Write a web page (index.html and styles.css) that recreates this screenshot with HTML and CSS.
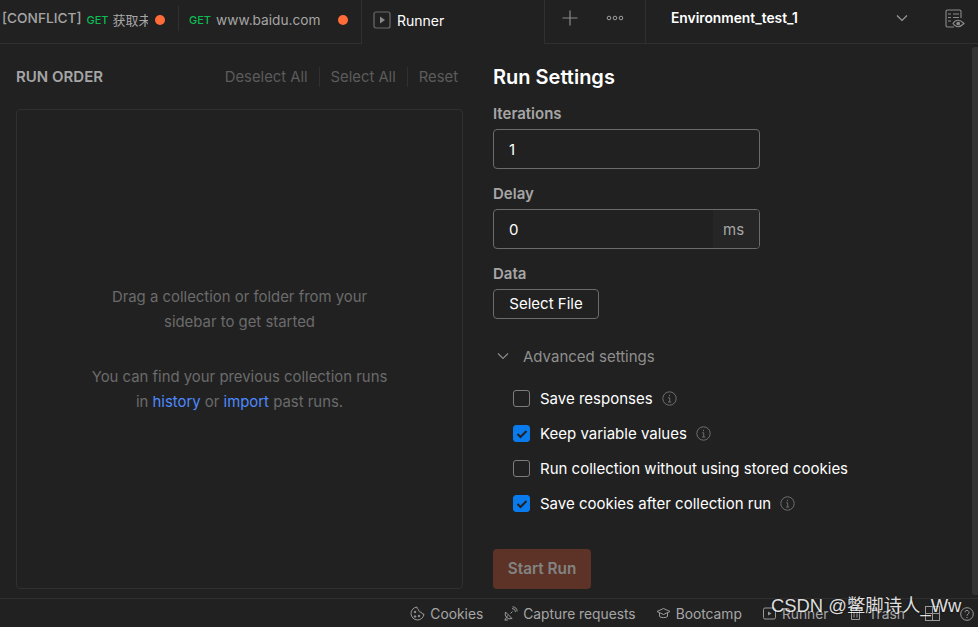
FILE: index.html
```html
<!DOCTYPE html>
<html lang="en">
<head>
<meta charset="utf-8">
<title>Runner</title>
<link rel="stylesheet" href="styles.css">
</head>
<body>
<div class="app">
  <header class="topbar">
    <div class="tab tab-first">
      <span class="conflict">[CONFLICT]</span>
      <span class="get">GET</span>
      <span class="tab-name tab-name-cjk">获取未读消息</span>
      <span class="dot"></span>
    </div>
    <div class="tab tab-second">
      <span class="get">GET</span>
      <span class="tab-name tab-name-url">www.baidu.com</span>
      <span class="dot"></span>
    </div>
    <div class="tab-runner">
      <svg class="runner-icon" width="18" height="18" viewBox="0 0 18 18"><rect x="1" y="1" width="16" height="16" rx="2" fill="none" stroke="#6b6b6b" stroke-width="1.2"/><path d="M7 5.5l5 3.5-5 3.5z" fill="#8a8a8a"/></svg>
      <span>Runner</span>
    </div>
    <div class="tab-actions">
      <svg width="16" height="16" viewBox="0 0 16 16"><path d="M8 0.5v15M0.5 8h15" stroke="#8a8a8a" stroke-width="1.2"/></svg>
      <svg width="18" height="6" viewBox="0 0 18 6"><g fill="none" stroke="#a0a0a0" stroke-width="1"><circle cx="3" cy="3" r="1.8"/><circle cx="9" cy="3" r="1.8"/><circle cx="15" cy="3" r="1.8"/></g></svg>
    </div>
    <div class="env">
      <span class="env-name">Environment_test_1</span>
      <svg width="12" height="8" viewBox="0 0 12 8"><path d="M1 1.5l5 5 5-5" fill="none" stroke="#9a9a9a" stroke-width="1.2"/></svg>
    </div>
    <div class="env-eye">
      <svg width="20" height="20" viewBox="0 0 20 20" fill="none" stroke="#8c8c8c" stroke-width="1.1"><path d="M9 18H2.5A1.5 1.5 0 0 1 1 16.500V2.500A1.500 1.500 0 0 1 2.500 1h12A1.500 1.500 0 0 1 16 2.500V9"/><path d="M3 5h3M8 5h6M3 8.500h3M8 8.500h6M3 12h3"/><path d="M8 14.500c1.500-2.400 3.200-3.200 5-3.200s3.500.8 6 3.200c-2.500 2.400-4.200 3.200-6 3.200s-3.500-.8-5-3.200z"/><circle cx="13.200" cy="14.500" r="1.300" fill="#8c8c8c"/></svg>
    </div>
  </header>

  <main class="main">
    <section class="order">
      <div class="order-head">
        <h2 class="order-title">RUN ORDER</h2>
        <div class="order-actions">
          <span>Deselect All</span>
          <span class="sep"></span>
          <span>Select All</span>
          <span class="sep"></span>
          <span>Reset</span>
        </div>
      </div>
      <div class="drop">
        <p>Drag a collection or folder from your<br>sidebar to get started</p>
        <p>You can find your previous collection runs<br>in <a class="link">history</a> or <a class="link">import</a> past runs.</p>
      </div>
    </section>

    <section class="settings">
      <h1 class="settings-title">Run Settings</h1>
      <label class="field-label">Iterations</label>
      <div class="input">1</div>
      <label class="field-label field-gap">Delay</label>
      <div class="input input-unit"><span class="input-value">0</span><span class="unit">ms</span></div>
      <label class="field-label field-gap">Data</label>
      <button class="file-btn">Select File</button>

      <div class="advanced">
        <svg width="12" height="8" viewBox="0 0 12 8"><path d="M1 1.500l5 5 5-5" fill="none" stroke="#8a8a8a" stroke-width="1.200"/></svg>
        <span>Advanced settings</span>
      </div>

      <ul class="checks">
        <li class="check-row"><span class="box"></span><span>Save responses</span><svg class="info" width="15" height="15" viewBox="0 0 15 15"><circle cx="7.500" cy="7.500" r="6.700" fill="none" stroke="#6e6e6e"/><path d="M7.500 3.800v1.400M6.200 6.800h1.500v4M6 11h3.200" fill="none" stroke="#6e6e6e"/></svg></li>
        <li class="check-row"><span class="box box-on"><svg width="12" height="10" viewBox="0 0 12 10"><path d="M1.500 5l3 3 6-6" fill="none" stroke="#212121" stroke-width="2"/></svg></span><span>Keep variable values</span><svg class="info" width="15" height="15" viewBox="0 0 15 15"><circle cx="7.500" cy="7.500" r="6.700" fill="none" stroke="#6e6e6e"/><path d="M7.500 3.800v1.400M6.200 6.800h1.500v4M6 11h3.200" fill="none" stroke="#6e6e6e"/></svg></li>
        <li class="check-row"><span class="box"></span><span>Run collection without using stored cookies</span></li>
        <li class="check-row"><span class="box box-on"><svg width="12" height="10" viewBox="0 0 12 10"><path d="M1.500 5l3 3 6-6" fill="none" stroke="#212121" stroke-width="2"/></svg></span><span>Save cookies after collection run</span><svg class="info" width="15" height="15" viewBox="0 0 15 15"><circle cx="7.500" cy="7.500" r="6.700" fill="none" stroke="#6e6e6e"/><path d="M7.500 3.800v1.400M6.200 6.800h1.500v4M6 11h3.200" fill="none" stroke="#6e6e6e"/></svg></li>
      </ul>

      <button class="start">Start Run</button>
    </section>
    <div class="scrollbar"></div>
  </main>

  <footer class="statusbar">
    <span class="status-item"><svg width="15" height="15" viewBox="0 0 15 15" fill="none" stroke="#9a9a9a"><path d="M7 1a6.500 6.500 0 1 0 7 7c-1.500.3-2.500-.5-2.700-1.800C9.800 6.300 8.600 5.300 8.700 3.800 7.700 3.500 7 2.500 7 1z"/><circle cx="5" cy="6" r=".8" fill="#9a9a9a"/><circle cx="9" cy="10" r=".8" fill="#9a9a9a"/><circle cx="5" cy="10.500" r=".8" fill="#9a9a9a"/></svg>Cookies</span>
    <span class="status-item"><svg width="15" height="15" viewBox="0 0 15 15" fill="none" stroke="#9a9a9a"><path d="M2.500 6a5 5 0 0 0 6.500 6.500zM2 14l2.500-4.500M5 14H1.500"/><path d="M7.500 7.500l2-2M9 2.500a3.500 3.500 0 0 1 3.500 3.500M9.500.8a5 5 0 0 1 4.700 4.700"/></svg>Capture requests</span>
    <span class="status-item"><svg width="15" height="15" viewBox="0 0 15 15" fill="none" stroke="#9a9a9a"><path d="M1 5.500l6.500-3 6.500 3-6.500 3z"/><path d="M3.500 7v3.500c1 1.500 7 1.500 8 0V7"/></svg>Bootcamp</span>
    <span class="status-item"><svg width="15" height="15" viewBox="0 0 15 15" fill="none" stroke="#9a9a9a"><rect x="1.500" y="2" width="12" height="11" rx="1.500"/><path d="M6 5.500l3.500 2-3.500 2z" fill="#9a9a9a" stroke="none"/></svg>Runner</span>
    <span class="status-item"><svg width="15" height="15" viewBox="0 0 15 15" fill="none" stroke="#9a9a9a"><path d="M2 4h11M5.500 4V2h4v2M3.500 4v9.500h8V4M6 6.500v5M9 6.500v5"/></svg>Trash</span>
    <span class="status-icon"><svg width="15" height="15" viewBox="0 0 15 15" fill="none" stroke="#9a9a9a"><rect x=".5" y=".5" width="14" height="14"/><path d="M7.500 .5V14.500M.5 7.500h14"/></svg></span>
    <span class="status-icon"><svg width="14" height="14" viewBox="0 0 14 14" fill="none" stroke="#9a9a9a"><circle cx="7" cy="7" r="6.300"/><path d="M5 5.300a2 2 0 1 1 3 1.800c-.7.400-1 .8-1 1.600M7 10v1"/></svg></span>
  </footer>
  <div class="watermark">CSDN @鳖脚诗人_Ww</div>
</div>
</body>
</html>
```
FILE: styles.css
```css
* { box-sizing: border-box; }
html, body { margin: 0; height: 100%; overflow: hidden; }
body {
  background: #212121;
  color: #fff;
  font-family: Inter, "Noto Sans CJK SC", sans-serif;
  font-size: 15px;
}
.app { position: relative; display: flex; flex-direction: column; height: 627px; }

/* Top bar */
.topbar { display: flex; height: 44px; flex: none; }
.tab {
  display: flex; align-items: center;
  height: 44px; padding-bottom: 4px;
  border-bottom: 1px solid #303030;
  font-size: 14px; color: #a6a6a6;
  white-space: nowrap; overflow: hidden;
  position: relative;
}
.tab-first { width: 179px; padding-left: 2px; }
.tab-first::after {
  content: ""; position: absolute; right: 0; top: 6px; height: 25px; width: 1px; background: #303030;
}
.tab-second { width: 183px; padding-left: 10px; border-right: 1px solid #303030; }
.tab-second .get { margin-right: 5px; }
.conflict { font-weight: 500; font-size: 13.700px; margin-right: 5px; margin-top: -3px; }
.get { color: #0cbb52; font-size: 11px; font-weight: 500; margin-right: 4px; }
.tab-name { overflow: hidden; }
.tab-name-cjk { width: 35px; font-size: 13px; margin-right: 7px; flex: none; }
.tab-name-url { width: 122px; font-size: 13.700px; flex: none; }
.dot { width: 10px; height: 10px; border-radius: 50%; background: #ff6c37; flex: none; }
.tab-runner {
  display: flex; align-items: center; gap: 6px;
  width: 182px; padding: 0 0 4px 11px; font-size: 14px; font-weight: 400;
}
.tab-actions {
  display: flex; align-items: center; gap: 28px;
  width: 102px; height: 44px; padding: 0 0 8px 17px;
  border-left: 1px solid #303030; border-right: 1px solid #303030; border-bottom: 1px solid #303030;
}
.env {
  display: flex; align-items: center; justify-content: space-between;
  width: 263px; height: 44px; padding: 0 1px 8px 25px;
  border-bottom: 1px solid #303030;
}
.env-name { font-size: 13.800px; font-weight: 600; }
.env-eye {
  flex: 1; height: 44px; padding: 9px 0 0 36px;
  border-bottom: 1px solid #303030;
}

/* Main */
.main { flex: 1; display: flex; position: relative; min-height: 0; }
.order { margin-left: 16px; padding-top: 22px; flex: none; width: 447px; }
.order-head { display: flex; justify-content: space-between; align-items: center; height: 20px; padding-right: 5px; }
.order-title { margin: 0; font-size: 15px; font-weight: 600; color: #a6a6a6; }
.order-actions { display: flex; align-items: center; gap: 11px; margin-top: 2px; color: #5c5c5c; font-size: 14.800px; }
.sep { width: 1px; height: 20px; background: #303030; }
.drop {
  margin-top: 23px; height: 480px; padding-top: 2px;
  border: 1px solid #303030; border-radius: 4px;
  display: flex; flex-direction: column; justify-content: center; align-items: center;
  gap: 30px; text-align: center; color: #6b6b6b; font-size: 14.900px; line-height: 25px;
}
.drop p { margin: 0; }
.link { color: #4d8aff; }
.settings { margin-left: 30px; padding-top: 21px; flex: none; width: 460px; }
.settings-title { margin: 0 0 15px; font-size: 20px; line-height: 24px; font-weight: 600; }
.field-label { display: block; height: 20px; line-height: 20px; font-weight: 600; color: #a6a6a6; font-size: 15px; margin-bottom: 5px; }
.field-gap { margin-top: 15px; }
.input {
  width: 267px; height: 40px; border: 1px solid #6b6b6b; border-radius: 4px;
  display: flex; align-items: center; padding-left: 15px; font-size: 15px;
}
.input-unit { padding-left: 0; overflow: hidden; }
.input-value { flex: 1; padding-left: 15px; }
.unit { width: 46px; height: 100%; display: flex; align-items: center; padding-left: 10px; color: #a6a6a6; background: #262626; }
.file-btn {
  display: block; width: 106px; height: 30px; padding: 0 0 2px;
  background: transparent; border: 1px solid #6b6b6b; border-radius: 4px;
  color: #fff; font: 400 15px Inter, sans-serif;
}
.advanced { display: flex; align-items: center; gap: 14px; margin: 27px 0 0 4px; height: 20px; color: #8f8f8f; font-size: 15px; }
.checks { list-style: none; margin: 15px 0 0 20px; padding: 0; }
.check-row { display: flex; align-items: center; height: 35px; font-size: 15px; }
.box { width: 17px; height: 17px; margin-right: 10px; border: 1px solid #7d7d7d; border-radius: 3px; display: flex; align-items: center; justify-content: center; flex: none; }
.box-on { background: #097bed; border-color: #097bed; }
.info { margin-left: 9px; }
.start {
  display: block; width: 98px; height: 40px; margin-top: 28px; padding: 0 0 2px;
  background: #5c3326; border: 0; border-radius: 4px;
  color: #838383; font: 600 15.300px Inter, sans-serif;
}
.scrollbar { position: absolute; right: 0; top: 3px; width: 6px; height: 548px; background: #333; border-radius: 3px 0 0 3px; }

/* Status bar */
.statusbar {
  display: flex; align-items: center; justify-content: flex-end; gap: 20px;
  height: 29px; flex: none; padding: 1px 4px 0 0;
  border-top: 1px solid #303030;
  color: #a6a6a6; font-size: 13.800px;
}
.status-item { display: flex; align-items: center; gap: 5px; white-space: nowrap; }
.status-icon { display: flex; }

/* Overlay watermark */
.watermark {
  position: absolute; left: 771px; top: 593px;
  font-family: "Liberation Sans", "Noto Sans CJK SC", sans-serif;
  font-size: 18.400px; line-height: 26px; color: #fff; white-space: nowrap;
  text-shadow: 0 0 2px #000;
  opacity: .85;
}
```
